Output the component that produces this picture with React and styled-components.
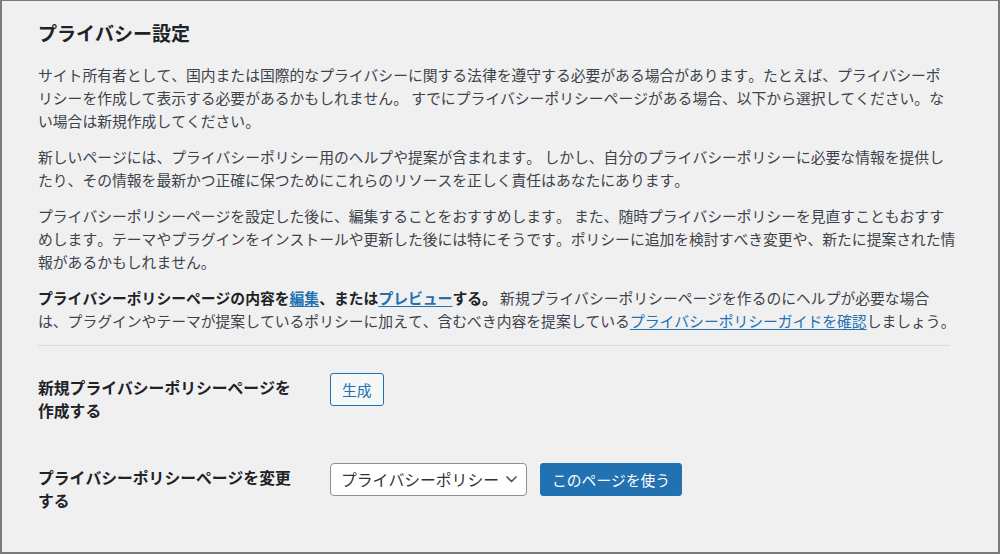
import React from 'react';
import styled, { createGlobalStyle } from 'styled-components';

const Global = createGlobalStyle`
  html, body { margin: 0; padding: 0; background: #f0f0f1; }
  body {
    font-family: "Noto Sans CJK JP", "Noto Sans", sans-serif;
    font-kerning: none;
    text-spacing-trim: space-all;
  }
  * { box-sizing: border-box; }
`;

const Frame = styled.div`
  width: 1000px;
  height: 554px;
  border-style: solid;
  border-color: #7a7a7a;
  border-width: 1px 2px 2px 2px;
  background: #f0f0f1;
  padding: 19px 0 0 36px;
  overflow: hidden;
`;

const Content = styled.div`
  width: 912px;
`;

const Title = styled.h2`
  margin: 0 0 16px;
  font-size: 19px;
  font-weight: 700;
  line-height: 26.6px;
  color: #1d2327;
`;

const Para = styled.p`
  margin: 0 0 13px;
  font-size: 14.8px;
  line-height: 23px;
  color: #3c434a;
  white-space: nowrap;
`;

const Strong = styled.strong`
  font-weight: 700;
  color: #1d2327;
`;

const Link = styled.a`
  color: #2271b1;
  text-decoration: underline;
  text-underline-offset: 2px;
  cursor: pointer;
`;

const Divider = styled.div`
  height: 1px;
  background: #dcdcde;
`;

const FormRow = styled.div`
  display: grid;
  grid-template-columns: 292px auto;
  align-items: start;
  padding: 27px 0 14px;
`;

const Label = styled.div`
  width: 262px;
  padding-top: 3px;
  font-size: 15.8px;
  line-height: 23px;
  font-weight: 700;
  color: #1d2327;
`;

const Controls = styled.div`
  display: flex;
  align-items: center;
  gap: 13px;
`;

const Button = styled.button`
  height: 33px;
  padding: 0 11px;
  border-radius: 3px;
  border: 1px solid #2271b1;
  background: ${(p) => (p.$primary ? '#2271b1' : '#f6f7f7')};
  color: ${(p) => (p.$primary ? '#ffffff' : '#2271b1')};
  font-family: inherit;
  font-size: 14.8px;
  line-height: 31px;
  white-space: nowrap;
  cursor: pointer;
`;

const SelectBox = styled.div`
  width: 197px;
  height: 33px;
  display: flex;
  align-items: center;
  justify-content: space-between;
  padding: 0 9px 0 10px;
  border: 1px solid #8c8f94;
  border-radius: 4px;
  background: #ffffff;
  color: #2c3338;
  font-size: 15.8px;
  line-height: 31px;
  white-space: nowrap;
`;

const Chevron = () => (
  <svg width="11" height="7" viewBox="0 0 11 7" fill="none">
    <polyline points="1,1 5.5,5.5 10,1" stroke="#50575e" strokeWidth="1.7" strokeLinecap="round" strokeLinejoin="round" />
  </svg>
);

export default function App() {
  return (
    <>
      <Global />
      <Frame>
        <Content>
          <Title>プライバシー設定</Title>
          <Para>
            サイト所有者として、国内または国際的なプライバシーに関する法律を遵守する必要がある場合があります。たとえば、プライバシーポ<br />
            リシーを作成して表示する必要があるかもしれません。 すでにプライバシーポリシーページがある場合、以下から選択してください。な<br />
            い場合は新規作成してください。
          </Para>
          <Para>
            新しいページには、プライバシーポリシー用のヘルプや提案が含まれます。 しかし、自分のプライバシーポリシーに必要な情報を提供し<br />
            たり、その情報を最新かつ正確に保つためにこれらのリソースを正しく責任はあなたにあります。
          </Para>
          <Para>
            プライバシーポリシーページを設定した後に、編集することをおすすめします。 また、随時プライバシーポリシーを見直すこともおすす<br />
            めします。テーマやプラグインをインストールや更新した後には特にそうです。ポリシーに追加を検討すべき変更や、新たに提案された情<br />
            報があるかもしれません。
          </Para>
          <Para>
            <Strong>
              プライバシーポリシーページの内容を<Link>編集</Link>、または<Link>プレビュー</Link>する。
            </Strong>{' '}
            新規プライバシーポリシーページを作るのにヘルプが必要な場合<br />
            は、プラグインやテーマが提案しているポリシーに加えて、含むべき内容を提案している<Link>プライバシーポリシーガイドを確認</Link>しましょう。
          </Para>
          <Divider />
          <FormRow>
            <Label>新規プライバシーポリシーページを作成する</Label>
            <Controls>
              <Button>生成</Button>
            </Controls>
          </FormRow>
          <FormRow>
            <Label>プライバシーポリシーページを変更する</Label>
            <Controls>
              <SelectBox>
                <span>プライバシーポリシー</span>
                <Chevron />
              </SelectBox>
              <Button $primary>このページを使う</Button>
            </Controls>
          </FormRow>
        </Content>
      </Frame>
    </>
  );
}
